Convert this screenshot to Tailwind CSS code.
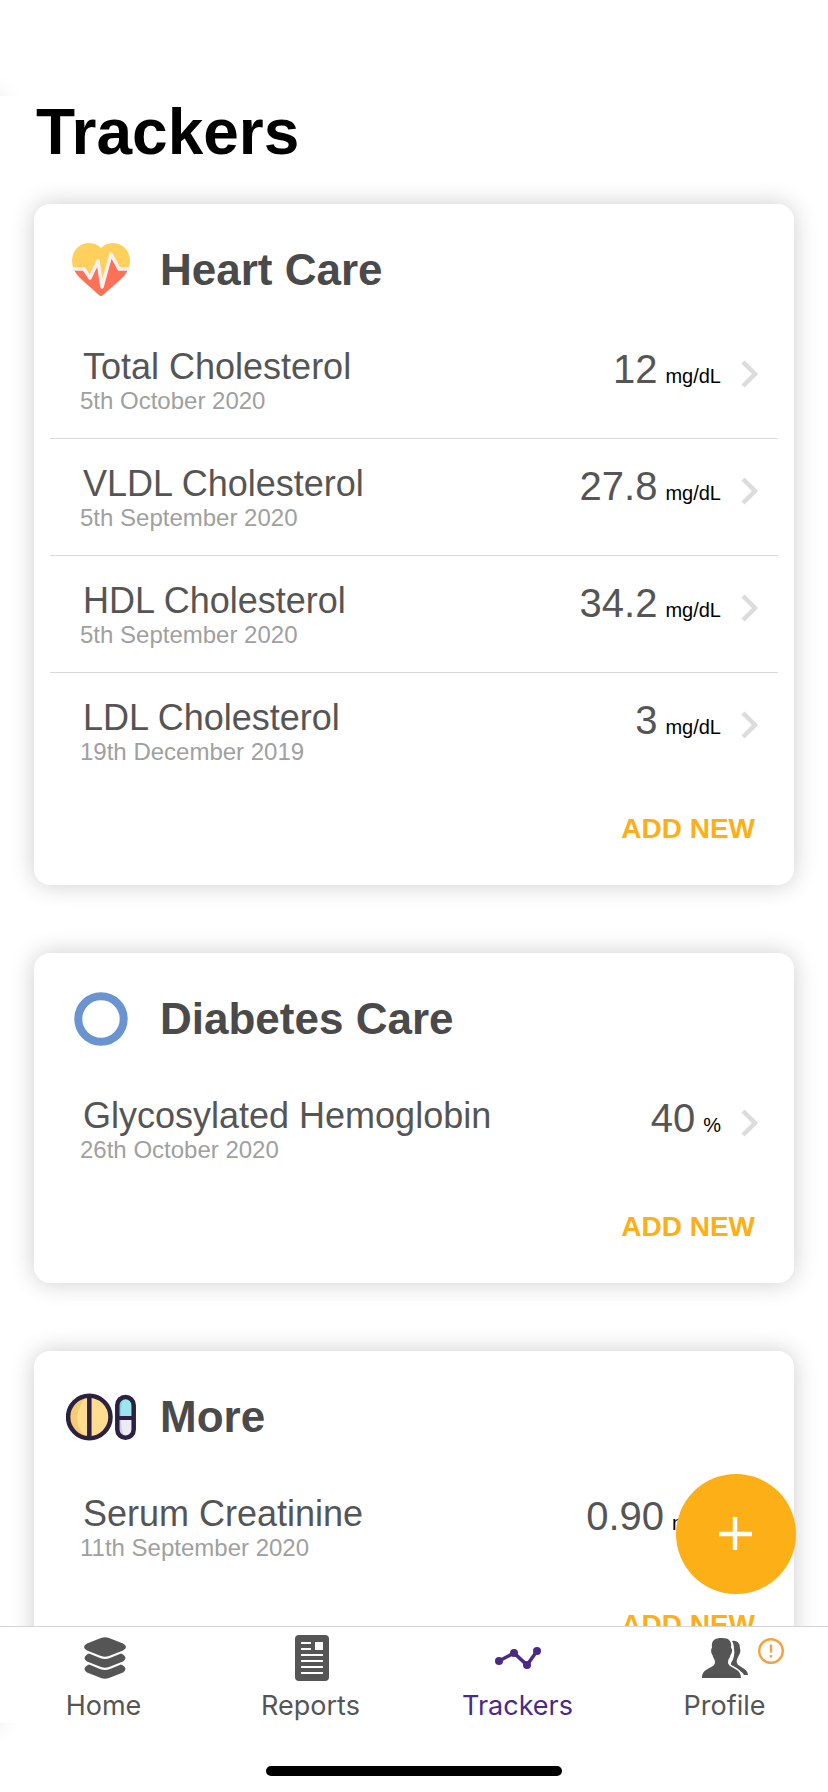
<!DOCTYPE html>
<html lang="en">
  <head>
    <meta charset="UTF-8" />
    <meta name="viewport" content="width=device-width, initial-scale=1.0" />
    <title>Trackers</title>
    <script src="https://cdn.jsdelivr.net/npm/@tailwindcss/browser@4"></script>
  </head>
  <body
    class="relative flex h-screen flex-col overflow-hidden bg-white font-['Liberation_Sans',Arial,sans-serif]"
  >
    <!-- closed side drawer, only its shadow shows at the edges -->
    <aside
      class="absolute top-24 right-full bottom-[69px] w-10 shadow-[0_0_24px_rgba(0,0,0,0.15)]"
    ></aside>

    <div class="h-24 shrink-0"></div>

    <main class="relative min-h-0 flex-1 overflow-hidden bg-white">
      <h1 class="pl-9 text-[64px] leading-[72px] font-bold text-black">
        Trackers
      </h1>

      <div class="mt-9 flex flex-col gap-[68px] px-[34px]">
        <!-- Heart Care -->
        <section class="rounded-2xl bg-white shadow-[0_0_24px_rgba(0,0,0,0.2)]">
          <div class="flex items-center gap-6 pt-[39px] pb-[25px] pl-8">
            <div class="flex w-[70px] justify-center">
              <svg class="h-[54px] w-[60px]" viewBox="0 0 60 54">
                <path
                  d="M30 5C26 1 22 0 18 0C8 0 1 8 1 18C1 21 2 24 3 27L12 27L18 35L27 23L31 44L41 14L48 27H57C58 24 59 21 59 18C59 8 52 0 42 0C38 0 34 1 30 5Z"
                  fill="#ffd15c"
                />
                <path
                  d="M3 27C5 31 8 34 11 37L28 52Q30 54 32 52L49 37C52 34 55 31 57 27L48 27L41 14L31 44L27 23L18 35L12 27Z"
                  fill="#ff7058"
                />
                <path
                  d="M1 26H13L19 35L27 18L31 44L40 11L48 26H59"
                  fill="none"
                  stroke="#f2f2f2"
                  stroke-width="3.5"
                  stroke-linejoin="round"
                />
              </svg>
            </div>
            <h2 class="text-[44px] leading-[54px] font-bold text-[#4a4a4a]">
              Heart Care
            </h2>
          </div>
          <ul class="px-4">
            <li class="h-[117px] border-b border-[#d9d9d9]">
              <a href="#" class="flex items-start pt-6 pr-5 pl-[30px]">
                <div class="flex-1">
                  <p class="pl-[3px] text-[36px] leading-[41px] text-[#555]">
                    Total Cholesterol
                  </p>
                  <p class="text-[24px] leading-7 text-[#a0a0a0]">
                    5th October 2020
                  </p>
                </div>
                <p class="flex items-baseline gap-2 leading-[46px]">
                  <span class="text-[40px] text-[#555]">12</span>
                  <span class="text-[20px] text-black">mg/dL</span>
                </p>
                <svg class="mt-3.5 ml-5 h-7 w-[17px]" viewBox="0 0 17 28">
                  <path d="M2 2L14 14L2 26" fill="none" stroke="#dcdcdc" stroke-width="4.5" />
                </svg>
              </a>
            </li>
            <li class="h-[117px] border-b border-[#d9d9d9]">
              <a href="#" class="flex items-start pt-6 pr-5 pl-[30px]">
                <div class="flex-1">
                  <p class="pl-[3px] text-[36px] leading-[41px] text-[#555]">
                    VLDL Cholesterol
                  </p>
                  <p class="text-[24px] leading-7 text-[#a0a0a0]">
                    5th September 2020
                  </p>
                </div>
                <p class="flex items-baseline gap-2 leading-[46px]">
                  <span class="text-[40px] text-[#555]">27.8</span>
                  <span class="text-[20px] text-black">mg/dL</span>
                </p>
                <svg class="mt-3.5 ml-5 h-7 w-[17px]" viewBox="0 0 17 28">
                  <path d="M2 2L14 14L2 26" fill="none" stroke="#dcdcdc" stroke-width="4.5" />
                </svg>
              </a>
            </li>
            <li class="h-[117px] border-b border-[#d9d9d9]">
              <a href="#" class="flex items-start pt-6 pr-5 pl-[30px]">
                <div class="flex-1">
                  <p class="pl-[3px] text-[36px] leading-[41px] text-[#555]">
                    HDL Cholesterol
                  </p>
                  <p class="text-[24px] leading-7 text-[#a0a0a0]">
                    5th September 2020
                  </p>
                </div>
                <p class="flex items-baseline gap-2 leading-[46px]">
                  <span class="text-[40px] text-[#555]">34.2</span>
                  <span class="text-[20px] text-black">mg/dL</span>
                </p>
                <svg class="mt-3.5 ml-5 h-7 w-[17px]" viewBox="0 0 17 28">
                  <path d="M2 2L14 14L2 26" fill="none" stroke="#dcdcdc" stroke-width="4.5" />
                </svg>
              </a>
            </li>
            <li class="h-[117px]">
              <a href="#" class="flex items-start pt-6 pr-5 pl-[30px]">
                <div class="flex-1">
                  <p class="pl-[3px] text-[36px] leading-[41px] text-[#555]">
                    LDL Cholesterol
                  </p>
                  <p class="text-[24px] leading-7 text-[#a0a0a0]">
                    19th December 2019
                  </p>
                </div>
                <p class="flex items-baseline gap-2 leading-[46px]">
                  <span class="text-[40px] text-[#555]">3</span>
                  <span class="text-[20px] text-black">mg/dL</span>
                </p>
                <svg class="mt-3.5 ml-5 h-7 w-[17px]" viewBox="0 0 17 28">
                  <path d="M2 2L14 14L2 26" fill="none" stroke="#dcdcdc" stroke-width="4.5" />
                </svg>
              </a>
            </li>
          </ul>
          <div class="flex justify-end pt-[23px] pr-[39px] pb-10">
            <button class="text-[28px] leading-8 font-bold text-[#fcaf17]">
              ADD NEW
            </button>
          </div>
        </section>

        <!-- Diabetes Care -->
        <section class="rounded-2xl bg-white shadow-[0_0_24px_rgba(0,0,0,0.2)]">
          <div class="flex items-center gap-6 pt-[39px] pb-[25px] pl-8">
            <div class="flex w-[70px] justify-center">
              <svg class="size-[54px]" viewBox="0 0 54 54">
                <circle cx="27" cy="27" r="22.7" fill="none" stroke="#6993d1" stroke-width="8" />
              </svg>
            </div>
            <h2 class="text-[44px] leading-[54px] font-bold text-[#4a4a4a]">
              Diabetes Care
            </h2>
          </div>
          <ul class="px-4">
            <li class="h-[117px]">
              <a href="#" class="flex items-start pt-6 pr-5 pl-[30px]">
                <div class="flex-1">
                  <p class="pl-[3px] text-[36px] leading-[41px] text-[#555]">
                    Glycosylated Hemoglobin
                  </p>
                  <p class="text-[24px] leading-7 text-[#a0a0a0]">
                    26th October 2020
                  </p>
                </div>
                <p class="flex items-baseline gap-2 leading-[46px]">
                  <span class="text-[40px] text-[#555]">40</span>
                  <span class="text-[20px] text-black">%</span>
                </p>
                <svg class="mt-3.5 ml-5 h-7 w-[17px]" viewBox="0 0 17 28">
                  <path d="M2 2L14 14L2 26" fill="none" stroke="#dcdcdc" stroke-width="4.5" />
                </svg>
              </a>
            </li>
          </ul>
          <div class="flex justify-end pt-[23px] pr-[39px] pb-10">
            <button class="text-[28px] leading-8 font-bold text-[#fcaf17]">
              ADD NEW
            </button>
          </div>
        </section>

        <!-- More -->
        <section class="rounded-2xl bg-white shadow-[0_0_24px_rgba(0,0,0,0.2)]">
          <div class="flex items-center gap-6 pt-[39px] pb-[25px] pl-8">
            <div class="flex w-[70px] justify-center">
              <svg class="h-12 w-[70px]" viewBox="0 0 70 48">
                <circle cx="23.3" cy="24" r="21" fill="#ffdc8f" />
                <path d="M23 3A21 21 0 0 0 23 45C7 38 8 12 23 3Z" fill="#f6cb73" />
                <path d="M23.3 3V45" stroke="#2b2140" stroke-width="4.5" />
                <circle cx="23.3" cy="24" r="21.2" fill="none" stroke="#2b2140" stroke-width="4.5" />
                <path d="M51.5 24V11a8 8 0 0 1 16 0V24Z" fill="#9ee6ee" />
                <path d="M51.5 24V11a8 8 0 0 1 8-8C55 8 55 15 55 24Z" fill="#86cfe0" />
                <path d="M51.5 24V37a8 8 0 0 0 16 0V24Z" fill="#eceaf4" />
                <path d="M51.5 24V37a8 8 0 0 0 8 8C56 40 55 34 55 24Z" fill="#d0cee0" />
                <rect x="51.3" y="4" width="16.4" height="40.7" rx="8.2" fill="none" stroke="#2b2140" stroke-width="4.5" />
                <path d="M51 25H68" stroke="#2b2140" stroke-width="4" />
              </svg>
            </div>
            <h2 class="text-[44px] leading-[54px] font-bold text-[#4a4a4a]">
              More
            </h2>
          </div>
          <ul class="px-4">
            <li class="h-[117px]">
              <a href="#" class="flex items-start pt-6 pr-5 pl-[30px]">
                <div class="flex-1">
                  <p class="pl-[3px] text-[36px] leading-[41px] text-[#555]">
                    Serum Creatinine
                  </p>
                  <p class="text-[24px] leading-7 text-[#a0a0a0]">
                    11th September 2020
                  </p>
                </div>
                <p class="flex items-baseline gap-2 leading-[46px]">
                  <span class="text-[40px] text-[#555]">0.90</span>
                  <span class="text-[20px] text-black">mg/dl</span>
                </p>
                <svg class="mt-3.5 ml-5 h-7 w-[17px]" viewBox="0 0 17 28">
                  <path d="M2 2L14 14L2 26" fill="none" stroke="#dcdcdc" stroke-width="4.5" />
                </svg>
              </a>
            </li>
          </ul>
          <div class="flex justify-end pt-[23px] pr-[39px] pb-10">
            <button class="text-[28px] leading-8 font-bold text-[#fcaf17]">
              ADD NEW
            </button>
          </div>
        </section>
      </div>

      <!-- floating add button -->
      <button
        aria-label="Add"
        class="absolute right-8 bottom-8 flex size-[120px] items-center justify-center rounded-full bg-[#fdaf17]"
      >
        <svg class="size-[34px]" viewBox="0 0 34 34">
          <path d="M16 0V33M0 17H33" stroke="#fff" stroke-width="4.5" />
        </svg>
      </button>
    </main>

    <nav
      class="relative grid shrink-0 grid-cols-4 border-t border-[#d4d4d4] bg-white pt-2 font-[Inter,sans-serif] text-[27px] leading-[34px] text-[#555]"
    >
      <a href="#" class="flex flex-col items-center gap-2">
        <svg class="size-[46px]" viewBox="0 0 46 46" fill="currentColor">
          <path d="M20 3Q24 1.600 28 3L42 8.500Q48 12 42 15.500L28 21Q24 22.600 20 21L6 15.500Q0 12 6 8.500Z" />
          <path d="M8 18.500L19 23Q24 25 29 23L40 18.500L42 19.500Q47 23 42 26.500L28 32Q24 33.600 20 32L6 26.500Q1 23 6 19.500Z" />
          <path d="M8 29.500L19 34Q24 36 29 34L40 29.500L42 30.500Q47 34 42 37.500L28 43Q24 44.600 20 43L6 37.500Q1 34 6 30.500Z" />
        </svg>
        Home
      </a>
      <a href="#" class="flex flex-col items-center gap-2">
        <svg class="size-[46px]" viewBox="0 0 46 46">
          <rect x="7" width="34" height="46" rx="4" fill="currentColor" />
          <path d="M13 8H23M13 14H23M13 20H35M13 26H35M13 32H35M13 38H35" stroke="#fff" stroke-width="2" />
          <rect x="27" y="7" width="8" height="8" fill="#fff" />
        </svg>
        Reports
      </a>
      <a href="#" class="flex flex-col items-center gap-2 text-[#4b2a86]">
        <svg class="size-[46px]" viewBox="0 0 46 46" fill="currentColor">
          <path d="M4 26L19 18L32 30L42 16" fill="none" stroke="currentColor" stroke-width="3.500" />
          <circle cx="4" cy="26" r="4" />
          <circle cx="19" cy="18" r="4" />
          <circle cx="32" cy="30" r="4" />
          <circle cx="42" cy="16" r="4" />
        </svg>
        Trackers
      </a>
      <a href="#" class="flex flex-col items-center gap-2">
        <div class="relative">
          <svg class="size-[46px]" viewBox="0 0 46 46" fill="currentColor">
            <path d="M30 6C36 5 38 9 38 14C39 15 38 19 37 20C36 23 34 25 35 28C36 32 46 33 46 40H42C40 36 34 34 29 31V28C32 24 33 18 32 14C32 10 31 8 30 6Z" />
            <path
              d="M10 13C9 5 13 3 20 3C27 3 30 6 29 13C31 14 30 18 28.500 20C28 23 26 24 26 27C26 34 39 32 39 43H0C0 32 13 34 13 27C13 24 11 23 10.500 20C9 18 8.500 14 10 13Z"
              stroke="#fff"
              stroke-width="3"
              paint-order="stroke"
            />
          </svg>
          <!-- alert badge -->
          <svg class="absolute top-[3px] left-14 size-[26px] text-[#f7a140]" viewBox="0 0 26 26">
            <circle cx="13" cy="13" r="11.800" fill="none" stroke="currentColor" stroke-width="2.400" />
            <path d="M13 6.500V14.500M13 17V19.500" stroke="currentColor" stroke-width="2.400" />
          </svg>
        </div>
        Profile
      </a>
    </nav>

    <!-- home indicator -->
    <div class="flex h-[69px] shrink-0 items-end justify-center pb-4">
      <div class="h-2.5 w-[296px] rounded-full bg-black"></div>
    </div>
  </body>
</html>
